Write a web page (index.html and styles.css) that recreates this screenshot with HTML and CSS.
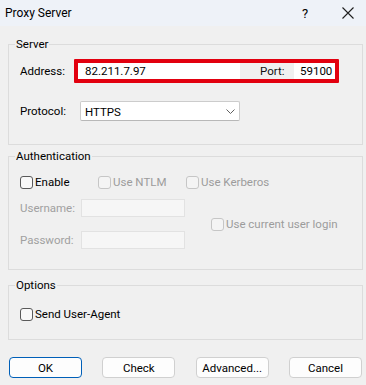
FILE: index.html
```html
<!DOCTYPE html>
<html lang="en">
<head>
  <meta charset="UTF-8" />
  <title>Proxy Server</title>
  <link rel="stylesheet" href="styles.css">
</head>
<body>

  <!-- Title bar -->
  <div class="titlebar">
    <span class="title">Proxy Server</span>
    <span class="help">?</span>
    <svg class="close" width="12" height="12" viewBox="0 0 12 12">
      <path d="M0.5 0.5 L11.5 11.5 M11.5 0.5 L0.5 11.5" stroke="#1f1f1f" stroke-width="1.1" fill="none"/>
    </svg>
  </div>

  <!-- Server -->
  <fieldset class="group server">
    <legend>Server</legend>
    <div class="row">
      <span class="lbl addr-lbl">Address:</span>
      <div class="highlight">
        <div class="edit address">82.211.7.97</div>
        <span class="port-lbl">Port:</span>
        <div class="edit port">59100</div>
      </div>
    </div>
    <div class="row protocol-row">
      <span class="lbl proto-lbl">Protocol:</span>
      <div class="combo">
        <span>HTTPS</span>
        <svg width="9" height="5" viewBox="0 0 9 5">
          <path d="M0.5 0.5 L4.5 4.5 L8.5 0.5" stroke="#606060" stroke-width="1" fill="none"/>
        </svg>
      </div>
    </div>
  </fieldset>

  <!-- Authentication -->
  <fieldset class="group auth">
    <legend>Authentication</legend>
    <div class="checks">
      <label class="check enable"><span class="box"></span>Enable</label>
      <label class="check ntlm disabled"><span class="box"></span>Use NTLM</label>
      <label class="check disabled"><span class="box"></span>Use Kerberos</label>
    </div>
    <div class="creds">
      <div class="fields">
        <div class="field"><span class="lbl cred-lbl">Username:</span><div class="edit off"></div></div>
        <div class="field"><span class="lbl cred-lbl">Password:</span><div class="edit off"></div></div>
      </div>
      <label class="check disabled current"><span class="box"></span>Use current user login</label>
    </div>
  </fieldset>

  <!-- Options -->
  <fieldset class="group options">
    <legend>Options</legend>
    <label class="check"><span class="box"></span>Send User-Agent</label>
  </fieldset>

  <!-- Buttons -->
  <div class="buttons">
    <button class="default">OK</button>
    <button>Check</button>
    <button>Advanced...</button>
    <button>Cancel</button>
  </div>

</body>
</html>
```

FILE: styles.css
```css
body {
  margin: 0;
  width: 366px;
  height: 385px;
  overflow: hidden;
  background: #f0f0f0;
  font-family: Roboto, "Noto Sans", sans-serif;
  font-size: 11.5px;
  color: #000;
}
.titlebar {
  height: 26px;
  background: #eef2f8;
  display: flex;
  align-items: center;
  padding-left: 5px;
}
.title {
  flex: 1;
  font-size: 12px;
}
.help {
  width: 14px;
  text-align: center;
  font-size: 13px;
}
.close {
  margin: 0 12px 0 30px;
}
.group {
  margin: 0 3px 0 8px;
  border: 1px solid #dcdcdc;
  min-width: 0;
}
.group legend {
  padding: 0 1px;
  margin-left: -5px;
  line-height: 16px;
}
.server {
  margin-top: 10px;
  padding: 7px 0 23px 11px;
}
.auth {
  margin-top: 3px;
  padding: 10px 0 20px 11px;
}
.options {
  margin-top: 7px;
  padding: 13px 0 17px 11px;
}
.row {
  display: flex;
  align-items: center;
}
.lbl {
  line-height: 16px;
}
.addr-lbl {
  width: 54px;
}
.proto-lbl {
  width: 60px;
}
.highlight {
  display: flex;
  width: 257px;
  height: 16px;
  border: 4px solid #e2000f;
  border-radius: 1px;
}
.edit {
  background: #fff;
  line-height: 16px;
  box-sizing: border-box;
}
.address {
  width: 162px;
  padding-left: 7px;
}
.port-lbl {
  width: 54px;
  padding-left: 20px;
  box-sizing: border-box;
  line-height: 16px;
  color: #111;
}
.port {
  flex: 1;
  padding-left: 6px;
}
.protocol-row {
  margin-top: 18px;
}
.combo {
  width: 160px;
  height: 20px;
  box-sizing: border-box;
  border: 1px solid #cccccc;
  border-bottom-color: #b8b8b8;
  border-radius: 2px;
  background: #fff;
  display: flex;
  align-items: center;
  justify-content: space-between;
  padding: 1px 4px 0 4px;
}
.check {
  display: flex;
  align-items: center;
  line-height: 16px;
}
.check .box {
  width: 11px;
  height: 11px;
  border: 1px solid #5a5a5a;
  border-radius: 3px;
  background: #f9f9f9;
  margin-right: 2px;
}
.check.disabled {
  color: #9c9c9c;
}
.check.disabled .box {
  border-color: #c6c6c6;
  background: #f4f4f4;
}
.checks {
  display: flex;
}
.enable {
  width: 78px;
}
.ntlm {
  width: 88px;
}
.creds {
  display: flex;
  align-items: center;
  margin-top: 9px;
}
.fields {
  display: flex;
  flex-direction: column;
  gap: 14px;
}
.field {
  display: flex;
  align-items: center;
}
.cred-lbl {
  width: 61px;
  color: #a0a0a0;
}
.edit.off {
  width: 104px;
  height: 18px;
  background: #f6f6f6;
  border: 1px solid #e2e2e2;
}
.current {
  margin-left: 26px;
}
.buttons {
  display: flex;
  justify-content: space-between;
  margin-top: 17px;
  padding: 0 4px 0 9px;
}
.buttons button {
  width: 73px;
  height: 21px;
  padding: 0;
  font-family: inherit;
  font-size: 11.5px;
  color: #000;
  background: #fdfdfd;
  border: 1px solid #d0d0d0;
  border-radius: 4px;
}
.buttons button.default {
  border-color: #005fb8;
}
```
